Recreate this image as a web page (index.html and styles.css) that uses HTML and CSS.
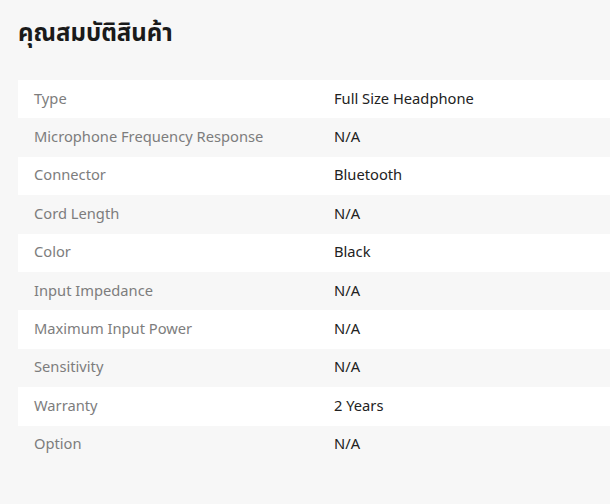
FILE: index.html
```html
<!DOCTYPE html>
<html lang="th">
<head>
<meta charset="utf-8">
<title>คุณสมบัติสินค้า</title>
<link rel="stylesheet" href="styles.css">
</head>
<body>
<section class="specs">
  <h2 class="specs-title">คุณสมบัติสินค้า</h2>
  <table class="spec-table">
    <tbody>
      <tr><td class="label">Type</td><td class="value">Full Size Headphone</td></tr>
      <tr><td class="label">Microphone Frequency Response</td><td class="value">N/A</td></tr>
      <tr><td class="label">Connector</td><td class="value">Bluetooth</td></tr>
      <tr><td class="label">Cord Length</td><td class="value">N/A</td></tr>
      <tr><td class="label">Color</td><td class="value">Black</td></tr>
      <tr><td class="label">Input Impedance</td><td class="value">N/A</td></tr>
      <tr><td class="label">Maximum Input Power</td><td class="value">N/A</td></tr>
      <tr><td class="label">Sensitivity</td><td class="value">N/A</td></tr>
      <tr><td class="label">Warranty</td><td class="value">2 Years</td></tr>
      <tr><td class="label">Option</td><td class="value">N/A</td></tr>
    </tbody>
  </table>
</section>
</body>
</html>
```

FILE: styles.css
```css
html, body {
  margin: 0;
  padding: 0;
  background: #f7f7f7;
  overflow: hidden;
}
body {
  font-family: "Noto Sans", "Noto Sans Thai", "DejaVu Sans", sans-serif;
  color: #222;
}
.specs {
  padding: 15px 0 0 18px;
}
.specs-title {
  margin: 0 0 32px;
  font-size: 24px;
  font-weight: 700;
  line-height: 33px;
  color: #1a1a1a;
}
.spec-table {
  width: 600px;
  border-collapse: collapse;
  table-layout: fixed;
}
.spec-table tr:nth-child(odd) {
  background: #ffffff;
}
.spec-table tr:nth-child(even) {
  background: #f7f7f7;
}
.spec-table td {
  height: 38.4px;
  padding: 0 16px 3px;
  box-sizing: border-box;
  font-size: 14.7px;
  vertical-align: middle;
}
.label {
  width: 50%;
  color: #7d7d7d;
}
.value {
  color: #222;
}
```
